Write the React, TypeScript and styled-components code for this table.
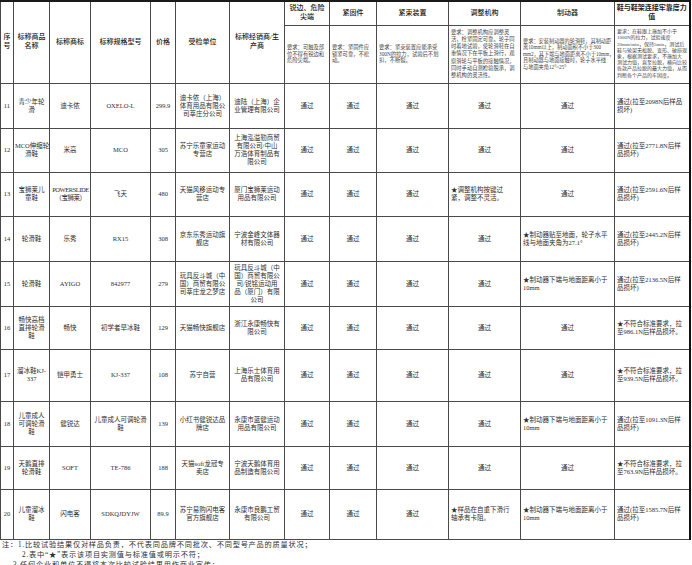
import styled, { createGlobalStyle } from "styled-components";

const GlobalStyle = createGlobalStyle`
  html, body {
    margin: 0;
    padding: 0;
    background: #ffffff;
  }
  body {
    font-family: "Liberation Serif", "Noto Sans CJK SC", serif;
    color: #2b2b2b;
  }
`;

const colWidths = [13, 36, 41, 60, 25, 54, 55, 45, 47, 72, 72, 94, 75];

const mainHeads = [
  "序\n号",
  "标称商品\n名称",
  "标称商标",
  "标称规格型号",
  "价格",
  "受检单位",
  "标称经销商/生\n产商",
];

const testHeads = [
  { title: "锐边、危险\n尖端", req: "要求：可触及部\n位不得有锐边和\n危险尖端。", fs: 5.3, lh: 6.6 },
  { title: "紧固件", req: "要求：紧固件应\n锁紧可靠，不松\n动。", fs: 5.3, lh: 6.6 },
  { title: "紧束装置", req: "要求：紧束装置应能承受\n300N的拉力，试验后不划\n扣，不断裂。", fs: 5.3, lh: 6.6 },
  {
    title: "调整机构",
    req: "要求：调整机构应调整灵\n活，栓紧固定可靠。轮子同\n时着地试验，使轮滑鞋在自\n重情况下在平板上滑行，观\n察滑轮与平板的接触情况，\n同时手动自测检验脱承，调\n整机构的灵活性。",
    fs: 5.3,
    lh: 7.2,
  },
  {
    title: "制动器",
    req: "要求：安装制动器的轮滑鞋，其制动距\n离10mm以上，制动面积不小于300\nmm2，其下端与地面距离不小于10mm，\n且制动器与地面接触时，轮子水平线\n与地面夹角12°~25°",
    fs: 5.2,
    lh: 6.6,
  },
  {
    title: "鞋与鞋架连接牢靠度力\n值",
    req: "要求：在鞋跟上施加不小于\n1000N的拉力，试验速度\n20mm/min，保持5min，测试后\n鞋与轮架无松脱、变形、破损现\n象，根据测试要求，不施加大\n测试力值，直至拉脱，横向比较\n各款产品拉脱的最大力值，从而\n判断各个产品的牢固度。",
    fs: 5,
    lh: 6.2,
  },
];

type Item = {
  no: string;
  name: string;
  brand: string;
  model: string;
  price: string;
  shop: string;
  maker: string;
  tests: string[];
  h: number;
};

const P = "通过";
const brake = "★制动器下端与地面距离小于\n10mm";
const pull = (n: string) =>
  n.includes(".") ? `通过(拉至${n}N后样\n品损坏)` : `通过(拉至${n}N后样品\n损坏)`;
const fail = (n: string) => `★不符合标准要求，拉\n至${n}N后样品损坏。`;

const items: Item[] = [
  {
    no: "11", name: "青少年轮\n滑", brand: "迪卡侬", model: "OXELO-L", price: "299.9",
    shop: "迪卡侬（上海）\n体育用品有限公\n司莘庄分公司", maker: "迪陆（上海）企\n业管理有限公司",
    tests: [P, P, P, P, P, pull("2098")], h: 45,
  },
  {
    no: "12", name: "MCO伸缩轮\n滑鞋", brand: "米高", model: "MCO", price: "305",
    shop: "苏宁乐童家运动\n专营店", maker: "上海泓溢勤商贸\n有限公司/中山\n万浩体育制品有\n限公司",
    tests: [P, P, P, P, P, pull("2771.8")], h: 44,
  },
  {
    no: "13", name: "宝狮莱儿\n童鞋", brand: "POWERSLIDE\n（宝狮莱）", model: "飞天", price: "480",
    shop: "天猫风移运动专\n营店", maker: "厦门宝狮莱运动\n用品有限公司",
    tests: [P, P, P, "★调整机构按键过\n紧，调整不灵活。", P, pull("2591.6")], h: 44,
  },
  {
    no: "14", name: "轮滑鞋", brand: "乐秀", model: "RX15", price: "308",
    shop: "京东乐秀运动旗\n舰店", maker: "宁波金峰文体器\n材有限公司",
    tests: [P, P, P, P, "★制动器贴至地面，轮子水平\n线与地面夹角为27.1°", pull("2445.2")], h: 45,
  },
  {
    no: "15", name: "轮滑鞋", brand: "AYIGO", model: "842977", price: "279",
    shop: "玩具反斗城（中\n国）商贸有限公\n司莘庄龙之梦店", maker: "玩具反斗城（中\n国）商贸有限公\n司/锐铭运动用\n品（厦门）有限\n公司",
    tests: [P, P, P, P, brake, pull("2136.5")], h: 45,
  },
  {
    no: "16", name: "畅快高档\n直排轮滑\n鞋", brand: "畅快", model: "初学者旱冰鞋", price: "129",
    shop: "天猫畅快旗舰店", maker: "浙江永康畅快有\n限公司",
    tests: [P, P, P, P, P, fail("986.1")], h: 43,
  },
  {
    no: "17", name: "溜冰鞋KJ-\n337", brand: "铠甲勇士", model: "KJ-337", price: "108",
    shop: "苏宁自营", maker: "上海乐士体育用\n品有限公司",
    tests: [P, P, P, P, P, fail("939.5")], h: 52,
  },
  {
    no: "18", name: "儿童成人\n可调轮滑\n鞋", brand: "健锐达", model: "儿童成人可调轮滑\n鞋", price: "139",
    shop: "小红书健锐达品\n牌店", maker: "永康市蓝健运动\n用品有限公司",
    tests: [P, P, P, P, brake, pull("1091.3")], h: 45,
  },
  {
    no: "19", name: "天鹅直排\n轮滑鞋", brand: "SOFT", model: "TE-786", price: "188",
    shop: "天猫soft龙冠专\n卖店", maker: "宁波天鹅体育用\n品制造有限公司",
    tests: [P, P, P, P, P, fail("763.9")], h: 43,
  },
  {
    no: "20", name: "儿童溜冰\n鞋", brand: "闪电客", model: "SDKQJDYJW", price: "89.9",
    shop: "苏宁易购闪电客\n官方旗舰店", maker: "永康市良鹏工贸\n有限公司",
    tests: [P, P, P, "★样品在自重下滑行\n轴承有卡阻。", brake, pull("1585.7")], h: 50,
  },
];

const Page = styled.div`
  width: 692px;
  height: 565px;
  overflow: hidden;
`;

const Table = styled.table`
  width: 689px;
  table-layout: fixed;
  border-collapse: collapse;
  border-top: 2px solid #1a1a1a;
  border-right: 2px solid #111;
  border-bottom: 1.5px solid #333;
`;

const Row = styled.tr<{ $h: number }>`
  height: ${(p) => p.$h}px;
`;

const HeadCell = styled.th<{ $bold?: boolean }>`
  border: 1px solid #4a4a4a;
  padding: 1px 1px;
  font-size: 7px;
  line-height: 9px;
  font-weight: ${(p) => (p.$bold ? 700 : 500)};
  color: #222;
  text-align: center;
  vertical-align: middle;
  white-space: pre;
  overflow: hidden;
`;

const ReqCell = styled.td<{ $fs: number; $lh: number }>`
  border: 1px solid #4a4a4a;
  padding: 0 0 0 2px;
  font-size: ${(p) => p.$fs}px;
  line-height: ${(p) => p.$lh}px;
  color: #444;
  text-align: left;
  vertical-align: middle;
  white-space: pre;
  overflow: hidden;
`;

const Cell = styled.td<{ $left?: boolean; $tight?: boolean }>`
  border: 1px solid #4a4a4a;
  padding: 1px ${(p) => (p.$tight ? 0 : 1)}px 1px ${(p) => (p.$left ? 2 : 1)}px;
  font-size: 6.5px;
  line-height: 8px;
  letter-spacing: ${(p) => (p.$tight ? "-0.45px" : "0")};
  color: #2e2e2e;
  text-align: ${(p) => (p.$left ? "left" : "center")};
  vertical-align: middle;
  white-space: pre;
  overflow: hidden;
`;

const Notes = styled.div`
  font-size: 7.2px;
  line-height: 10px;
  letter-spacing: 0.8px;
  color: #2e2e2e;
`;

const NoteLine = styled.div<{ $indent: number }>`
  padding-left: ${(p) => p.$indent}px;
  white-space: nowrap;
`;

export default function App() {
  return (
    <Page>
      <GlobalStyle />
      <Table>
        <colgroup>
          {colWidths.map((w, i) => (
            <col key={i} style={{ width: w }} />
          ))}
        </colgroup>
        <thead>
          <Row $h={24}>
            {mainHeads.map((t) => (
              <HeadCell key={t} rowSpan={2}>
                {t}
              </HeadCell>
            ))}
            {testHeads.map((t, i) => (
              <HeadCell key={t.title} $bold={i === 5}>
                {t.title}
              </HeadCell>
            ))}
          </Row>
          <Row $h={58}>
            {testHeads.map((t) => (
              <ReqCell key={t.title} $fs={t.fs} $lh={t.lh}>
                {t.req}
              </ReqCell>
            ))}
          </Row>
        </thead>
        <tbody>
          {items.map((it) => (
            <Row key={it.no} $h={it.h}>
              <Cell>{it.no}</Cell>
              <Cell>{it.name}</Cell>
              <Cell $tight={it.brand.startsWith("POWER")}>{it.brand}</Cell>
              <Cell>{it.model}</Cell>
              <Cell>{it.price}</Cell>
              <Cell>{it.shop}</Cell>
              <Cell>{it.maker}</Cell>
              {it.tests.map((t, i) => (
                <Cell key={i} $left={t.startsWith("★") || i === 5}>
                  {t}
                </Cell>
              ))}
            </Row>
          ))}
        </tbody>
      </Table>
      <Notes>
        <NoteLine $indent={2}>
          注：1.比较试验结果仅对样品负责，不代表同品牌不同批次、不同型号产品的质量状况；
        </NoteLine>
        <NoteLine $indent={22}>2.表中“★”表示该项目实测值与标准值或明示不符；</NoteLine>
        <NoteLine $indent={13}>3.任何企业和单位不得将本次比较试验结果用作商业宣传；</NoteLine>
      </Notes>
    </Page>
  );
}
